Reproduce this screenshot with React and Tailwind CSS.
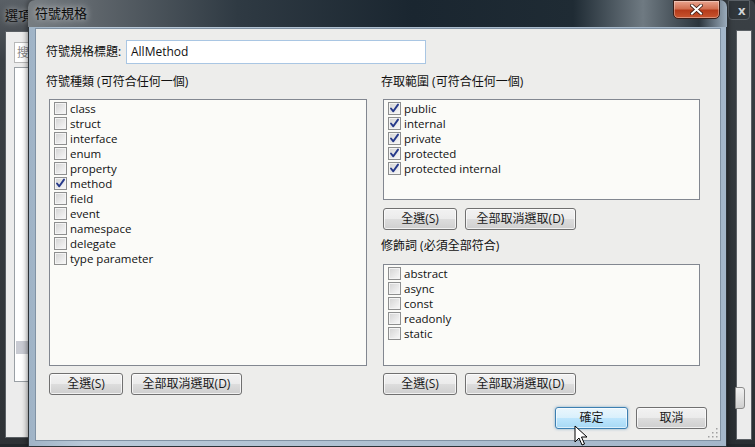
import React from 'react';

const kinds = [
  ['class', false],
  ['struct', false],
  ['interface', false],
  ['enum', false],
  ['property', false],
  ['method', true],
  ['field', false],
  ['event', false],
  ['namespace', false],
  ['delegate', false],
  ['type parameter', false],
];

const access = ['public', 'internal', 'private', 'protected', 'protected internal'];
const modifiers = ['abstract', 'async', 'const', 'readonly', 'static'];

const font = 'font-["Open_Sans","Noto_Sans_CJK_TC",sans-serif]';

function CheckBox({ checked }) {
  return (
    <span className="w-[13px] h-[13px] shrink-0 border border-[#8e8f8f] bg-[#f4f4f4] p-px">
      <span className="relative flex w-full h-full items-center justify-center bg-[linear-gradient(135deg,#d6d6d6,#f6f6f6)]">
        {checked && (
          <svg width="11" height="11" viewBox="0 0 11 11" className="absolute -top-px -left-px">
            <path d="M2 5.5 L4.3 8.3 L9 1.6" fill="none" stroke="#26398a" strokeWidth="1.9" strokeLinecap="round" strokeLinejoin="round" />
          </svg>
        )}
      </span>
    </span>
  );
}

function Item({ label, checked }) {
  return (
    <div className="flex h-[15px] items-center gap-[3px] pl-[4px]">
      <CheckBox checked={checked} />
      <span className="text-[11.5px] leading-[14px] text-[#111]">{label}</span>
    </div>
  );
}

function Btn({ children, w, primary }) {
  const face = primary
    ? 'border-[#3c7fb1] bg-[linear-gradient(#eaf6fd_0%,#d9f0fc_50%,#bee6fd_50%,#a7d9f5_100%)] shadow-[inset_0_0_0_1px_rgba(255,255,255,0.6),0_0_3px_rgba(60,127,177,0.6)]'
    : 'border-[#707070] bg-[linear-gradient(#f2f2f2_0%,#ebebeb_50%,#dddddd_50%,#cfcfcf_100%)] shadow-[inset_0_0_0_1px_rgba(255,255,255,0.7)]';
  return (
    <button className={`${w} h-[22px] rounded-[3px] border ${face} text-[12px] leading-none text-[#1a1a1a] flex items-center justify-center`}>
      {children}
    </button>
  );
}

function ListBox({ h, children }) {
  return (
    <div className={`${h} border border-[#828790] bg-[#fbfbf8] pt-[1px]`}>{children}</div>
  );
}

export default function App() {
  return (
    <div className={`relative w-[755px] h-[447px] overflow-hidden bg-[#23282c] ${font}`}>
      {/* background window (left) */}
      <div className="absolute left-0 top-0 w-[60px] h-[444px] bg-[linear-gradient(#5a6066,#3b4045_60px,#2e3236)] rounded-tr-[6px] border-r border-[#222]">
        <div className="h-[31px] flex items-center pl-[5px] text-[13px] text-[#0c0c0c] [text-shadow:0_0_6px_rgba(255,255,255,0.7)]">選項</div>
        <div className="ml-[5px] h-[407px] bg-[#ececec] border border-[#5b6065] pt-[10px] pl-[8px]">
          <div className="h-[21px] border border-[#b8b8b8] bg-white text-[12px] leading-[19px] pl-[2px] text-[#888]">搜</div>
          <div className="mt-[4px] h-[315px] border border-[#9aa0a5] bg-white relative">
            <div className="absolute left-[1px] top-[273px] w-[40px] h-[13px] bg-[#c9cbd3]" />
          </div>
        </div>
      </div>

      {/* background window (right) */}
      <div className="absolute left-[718px] top-0 w-[37px] h-[444px] bg-[linear-gradient(#3a4045,#2a2f33)] rounded-tr-[6px] border-l border-[#111]">
        <div className="absolute left-[9px] top-0 w-[22px] h-[20px] border border-[#5a6066] rounded-b-[4px] bg-[#30363b] text-[#cfd3d6] text-[13px] font-bold leading-[18px] pl-[9px]">x</div>
        <div className="absolute left-[17px] top-[30px] w-[16px] h-[410px] bg-[#ececec] border border-[#5b6065]">
          <div className="absolute left-[-2px] top-[356px] w-[10px] h-[22px] border border-[#8a8a8a] rounded-r-[3px] bg-[linear-gradient(#f2f2f2,#cfcfcf)]" />
        </div>
      </div>

      {/* dialog */}
      <div className="absolute left-[28px] top-0 w-[699px] h-[447px] rounded-t-[7px] border border-[#2d3338] bg-[linear-gradient(90deg,#9fb3c6,#b9c9d8_8%,#a3b6c9)] shadow-[0_0_6px_rgba(0,0,0,0.6)]">
        <div className="relative h-[27px] -mx-px -mt-px rounded-t-[7px] bg-[linear-gradient(90deg,#777d82_0%,#5d646a_10%,#2f3a43_30%,#1a2630_55%,#1f2b34_78%,#6f7a82_88%,#2b353d_96%,#9aabbb_100%)] flex items-center pl-[7px]">
          <span className="text-[13px] text-[#0a0a0a] [text-shadow:0_0_7px_rgba(255,255,255,0.85)]">符號規格</span>
          <div className="absolute left-[645px] top-0 w-[47px] h-[19px] rounded-b-[5px] border border-[#3b1e17] bg-[linear-gradient(#e9a48f_0%,#d27052_45%,#b53b1b_55%,#c8552f_100%)] shadow-[inset_0_0_0_1px_rgba(255,255,255,0.35)] flex items-center justify-center">
            <svg width="13" height="11" viewBox="0 0 13 11">
              <path d="M2 1.5 L11 9.5 M11 1.5 L2 9.5" stroke="#3a1a12" strokeWidth="3.6" strokeLinecap="square" />
              <path d="M2 1.5 L11 9.5 M11 1.5 L2 9.5" stroke="#fff" strokeWidth="2" strokeLinecap="square" />
            </svg>
          </div>
        </div>

        <div className="absolute left-[6px] top-[27px] w-[686px] h-[413px] bg-[#ededeb] border border-[#8092a4] pl-[10px] pr-[12px]">
          {/* title row */}
          <div className="mt-[11px] flex items-center h-[24px]">
            <span className="w-[80px] text-[12px] text-[#111]">符號規格標題:</span>
            <div className="w-[300px] h-[24px] border border-[#a9c6e3] bg-white flex items-center pl-[4px] text-[12px] text-[#111]">AllMethod</div>
          </div>

          <div className="mt-[10px] flex gap-[14px]">
            {/* left column */}
            <div className="w-[321px] flex flex-col">
              <div className="h-[16px] text-[12px] leading-[16px] text-[#111]">符號種類 (可符合任何一個)</div>
              <div className="ml-[3px] mt-[9px]">
                <ListBox h="h-[267px]">
                  {kinds.map(([k, c]) => (
                    <Item key={k} label={k} checked={c} />
                  ))}
                </ListBox>
                <div className="mt-[7px] flex gap-[8px]">
                  <Btn w="w-[74px]">全選(S)</Btn>
                  <Btn w="w-[111px]">全部取消選取(D)</Btn>
                </div>
              </div>
            </div>

            {/* right column */}
            <div className="w-[319px] flex flex-col">
              <div className="h-[16px] text-[12px] leading-[16px] text-[#111]">存取範圍 (可符合任何一個)</div>
              <div className="ml-[2px] mt-[9px]">
                <ListBox h="h-[101px]">
                  {access.map((k) => (
                    <Item key={k} label={k} checked />
                  ))}
                </ListBox>
                <div className="mt-[8px] flex gap-[8px]">
                  <Btn w="w-[74px]">全選(S)</Btn>
                  <Btn w="w-[111px]">全部取消選取(D)</Btn>
                </div>
              </div>
              <div className="mt-[8px] h-[16px] text-[12px] leading-[16px] text-[#111]">修飾詞 (必須全部符合)</div>
              <div className="ml-[2px] mt-[10px]">
                <ListBox h="h-[102px]">
                  {modifiers.map((k) => (
                    <Item key={k} label={k} />
                  ))}
                </ListBox>
                <div className="mt-[7px] flex gap-[8px]">
                  <Btn w="w-[74px]">全選(S)</Btn>
                  <Btn w="w-[111px]">全部取消選取(D)</Btn>
                </div>
              </div>
            </div>
          </div>

          {/* footer */}
          <div className="mt-[12px] flex justify-end gap-[8px] pr-[1px]">
            <Btn w="w-[73px]" primary>確定</Btn>
            <Btn w="w-[71px]">取消</Btn>
          </div>

          {/* size grip */}
          <svg className="absolute right-[2px] bottom-[2px]" width="11" height="11" viewBox="0 0 11 11">
            {[[9, 1], [9, 5], [5, 5], [9, 9], [5, 9], [1, 9]].map(([x, y]) => (
              <rect key={`${x}-${y}`} x={x} y={y} width="1.5" height="1.5" fill="#a0a0a0" />
            ))}
          </svg>
        </div>
      </div>

      {/* mouse cursor */}
      <svg className="absolute left-[574px] top-[425px]" width="14" height="22" viewBox="0 0 14 22">
        <path d="M1 1 L1 17 L5 13 L8 20 L10.5 19 L7.5 12 L13 12 Z" fill="#fff" stroke="#000" strokeWidth="1" strokeLinejoin="round" />
      </svg>
    </div>
  );
}
